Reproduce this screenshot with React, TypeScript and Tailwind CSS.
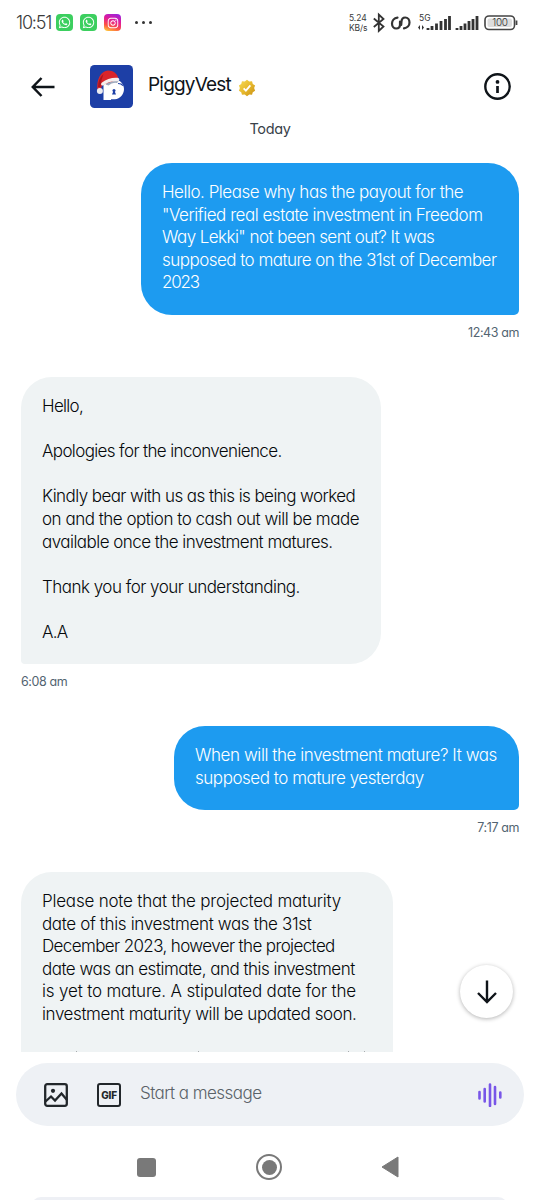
import type { ReactNode } from "react";
import { FaInstagram, FaWhatsapp } from "react-icons/fa";

type Line = { text: string; tracking?: string };

const payoutQuestion: Line[] = [
  { text: "Hello. Please why has the payout for the", tracking: "tracking-[-0.48px]" },
  { text: "\"Verified real estate investment in Freedom", tracking: "tracking-[-0.47px]" },
  { text: "Way Lekki\" not been sent out? It was", tracking: "tracking-[-0.56px]" },
  { text: "supposed to mature on the 31st of December", tracking: "tracking-[-0.53px]" },
  { text: "2023", tracking: "tracking-[-1.2px]" },
];

const apology: Line[] = [
  { text: "Hello,", tracking: "tracking-[-0.7px]" },
  { text: "" },
  { text: "Apologies for the inconvenience.", tracking: "tracking-[-0.63px]" },
  { text: "" },
  { text: "Kindly bear with us as this is being worked", tracking: "tracking-[-0.57px]" },
  { text: "on and the option to cash out will be made", tracking: "tracking-[-0.49px]" },
  { text: "available once the investment matures.", tracking: "tracking-[-0.54px]" },
  { text: "" },
  { text: "Thank you for your understanding.", tracking: "tracking-[-0.51px]" },
  { text: "" },
  { text: "A.A", tracking: "tracking-[-0.8px]" },
];

const followUp: Line[] = [
  { text: "When will the investment mature? It was", tracking: "tracking-[-0.43px]" },
  { text: "supposed to mature yesterday", tracking: "tracking-[-0.46px]" },
];

const estimate: Line[] = [
  { text: "Please note that the projected maturity", tracking: "tracking-[-0.21px]" },
  { text: "date of this investment was the 31st", tracking: "tracking-[-0.36px]" },
  { text: "December 2023, however the projected", tracking: "tracking-[-0.62px]" },
  { text: "date was an estimate, and this investment", tracking: "tracking-[-0.51px]" },
  { text: "is yet to mature. A stipulated date for the", tracking: "tracking-[-0.17px]" },
  { text: "investment maturity will be updated soon.", tracking: "tracking-[-0.4px]" },
  { text: "" },
];

function Lines({ lines }: { lines: Line[] }) {
  return (
    <>
      {lines.map((line, i) => (
        <p key={i} className={`h-[22.6px] whitespace-nowrap ${line.tracking ?? ""}`}>
          {line.text}
        </p>
      ))}
    </>
  );
}

function Sent({ className, children }: { className: string; children: ReactNode }) {
  return (
    <div
      className={`shrink-0 self-end rounded-[31px] rounded-br-[5px] bg-[#1d9bf0] pt-[18px] pl-[21px] text-[17px] leading-[22.6px] font-light text-white ${className}`}
    >
      {children}
    </div>
  );
}

function Received({ className, children }: { className: string; children: ReactNode }) {
  return (
    <div
      className={`shrink-0 rounded-[31px] rounded-bl-[4px] bg-[#eff3f4] pt-[18px] pl-[21px] text-[17px] leading-[22.6px] font-light text-[#05080b] ${className}`}
    >
      {children}
    </div>
  );
}

function Time({ className = "", children }: { className?: string; children: ReactNode }) {
  return (
    <p className={`mt-2 h-[54px] shrink-0 text-[12.5px] leading-[20px] tracking-[-0.4px] text-[#536471] ${className}`}>
      {children}
    </p>
  );
}

function StatusBar() {
  return (
    <div className="flex h-[46px] shrink-0 items-center pb-px pl-4 text-[#3a3a3a]">
      <span className="w-10 text-[18px] leading-none font-light tracking-[-1.2px] whitespace-nowrap">10:51</span>
      <div className="flex gap-[7px]">
        <span className="flex size-[17px] items-center justify-center rounded-[4px] bg-[#3ccf5f] text-white">
          <FaWhatsapp size={13} />
        </span>
        <span className="flex size-[17px] items-center justify-center rounded-[4px] bg-[#3ccf5f] text-white">
          <FaWhatsapp size={13} />
        </span>
        <span className="flex size-[17px] items-center justify-center rounded-[4px] bg-[linear-gradient(20deg,#ffc63a_5%,#fb5245_30%,#e01a9c_62%,#8b25e8_100%)] text-white">
          <FaInstagram size={12} />
        </span>
      </div>
      <div className="ml-[14px] flex gap-[4px]">
        <i className="size-[3px] rounded-full bg-[#333]" />
        <i className="size-[3px] rounded-full bg-[#333]" />
        <i className="size-[3px] rounded-full bg-[#333]" />
      </div>
      <div className="ml-auto flex items-center pr-[18px]">
        <div className="w-[23px] pt-[2px] text-[8.5px] leading-[9.5px] tracking-[-0.1px] whitespace-nowrap">
          <p>5.24</p>
          <p>KB/s</p>
        </div>
        <svg width="150" height="22" viewBox="0 0 150 22" fill="none">
          <path d="M1.800 6.500 11.500 14.500 6.800 19V2.500L11.500 7l-9.700 8" stroke="#333" strokeWidth="1.800" />
          <path
            d="M25.500 5.600c-3.500.4-5.500 3-5.500 5.900 0 2.800 1.700 5 4.300 5 2.500 0 3.700-1.700 3.700-4V9.500"
            stroke="#333"
            strokeWidth="2.200"
            strokeLinecap="round"
          />
          <path
            d="M32 16.400c3.500-.4 5.500-3 5.500-5.900 0-2.800-1.700-5-4.300-5-2.500 0-3.500 1.700-3.700 4l-.3 3.500"
            stroke="#333"
            strokeWidth="2.200"
            strokeLinecap="round"
          />
          <path d="m46 15.500 2-2.500v5zM52 15.500 50 18v-5z" fill="#333" />
          <path
            d="M56 18v-2M60 18v-4M64.500 18v-6.500M69 18V9M73.500 18V7M77.500 18V4M85 18v-2M89 18v-4M93 18v-6.500M97 18V9M101 18V7M105 18V4"
            stroke="#333"
            strokeWidth="2.800"
          />
          <text x="47" y="9" fontSize="8.500" fill="#333">5G</text>
          <rect x="113" y="4" width="29.500" height="13.500" rx="4" stroke="#444" strokeWidth="1.600" />
          <rect x="115.500" y="6.500" width="24.500" height="8.500" rx="2" fill="#ddd" />
          <path d="M144.500 8.500v4.500" stroke="#444" strokeWidth="1.800" />
          <text x="128" y="14.300" textAnchor="middle" fontSize="10" fontWeight="300" letterSpacing="-0.300" fill="#333">100</text>
        </svg>
      </div>
    </div>
  );
}

function Avatar() {
  return (
    <svg className="size-[43px]" viewBox="0 0 43 43">
      <rect width="43" height="43" rx="4.500" fill="#1d3fa6" />
      <path d="M13.500 18H17q3-3.800 8-3.500c5 .3 9 4.500 9 9.500 0 5.500-4 9.800-9 10.300h-4v.7h-7.500z" fill="#fff" />
      <path d="M15.500 19.500q5-5 13.500-4l-2 2.500q-5-.8-8.500 2.500z" fill="#9fa9bd" />
      <path d="M28 18.500q3.500 0 5 2.200" stroke="#1d3fa6" strokeWidth="1.200" fill="none" />
      <path d="M7.500 25C6 15 11 5.500 18 5.500c5.500 0 9.500 3 10.500 8.500L12.500 20q-1.500 2-2 5z" fill="#d9252b" />
      <path d="M8 22q0-8 5.500-13-2.500 6-3 13z" fill="#a91420" />
      <path d="M12 17.500q6.500-5.300 15.500-4.800c2.500.2 2.300 3.500 0 3.500-6-.4-10 .8-14 4-2.300 1-3.400-1.200-1.500-2.700z" fill="#f5efee" />
      <circle cx="9.900" cy="26" r="3" fill="#ececf0" />
      <circle cx="24" cy="25.500" r="1.500" fill="#1d3fa6" />
      <path d="m23.500 26-1.500 3.500h4L24.500 26z" fill="#1d3fa6" />
    </svg>
  );
}

function VerifiedBadge() {
  return (
    <svg className="mt-[3px] ml-[6px] size-[18px]" viewBox="0 0 24 24">
      <defs>
        <linearGradient id="gold" x1="0" y1="0" x2="1" y2="1">
          <stop offset="0" stopColor="#f6dc55" />
          <stop offset=".5" stopColor="#e7b92d" />
          <stop offset="1" stopColor="#c99014" />
        </linearGradient>
      </defs>
      <path
        fill="url(#gold)"
        d="m12 1 3 2.300 3.700-.3 1 3.600 3.100 2L21.500 12l1.300 3.500-3.100 2-1 3.600-3.700-.3L12 23l-3-2.200-3.700.3-1-3.600-3.100-2L2.500 12 1.200 8.600l3.100-2 1-3.600 3.700.3z"
      />
      <path d="m7.500 12.500 3 3 6-7" fill="none" stroke="#fff" strokeWidth="2.300" />
    </svg>
  );
}

function Header() {
  return (
    <header className="flex h-[81px] shrink-0 items-center pl-[31px]">
      <svg className="h-[20px] w-[24px]" viewBox="0 0 24 20" fill="none" stroke="#0f1419" strokeWidth="2.500">
        <path d="M23.500 10H2M10.500 1 1.800 10l8.700 9" />
      </svg>
      <div className="ml-[35px]">
        <Avatar />
      </div>
      <h1 className="mb-[3px] ml-[15px] w-[84px] text-[19px] leading-6 font-normal tracking-[-0.8px] whitespace-nowrap text-[#0f1419]">
        PiggyVest
      </h1>
      <VerifiedBadge />
      <svg className="mr-[29px] ml-auto size-[27px]" viewBox="0 0 27 27" fill="none">
        <circle cx="13.500" cy="13.500" r="12.200" stroke="#0f1419" strokeWidth="2.400" />
        <circle cx="13.500" cy="8.900" r="1.900" fill="#0f1419" />
        <path d="M13.500 13v7" stroke="#0f1419" strokeWidth="2.700" />
      </svg>
    </header>
  );
}

function Composer() {
  return (
    <div className="mx-4 mt-[11px] flex h-[63px] shrink-0 items-center rounded-full bg-[#eef1f5] pl-7">
      <svg className="size-6" viewBox="0 0 24 24" fill="none" stroke="#22272b" strokeWidth="2.300">
        <rect x="1.200" y="1.200" width="21.600" height="21.600" rx="2" />
        <path d="m1.500 18.500 5.500-5 4 4 6.500-7 5.500 6.500" />
        <circle cx="9" cy="7.800" r="2.100" fill="#22272b" stroke="none" />
      </svg>
      <div className="ml-[29px] flex size-6 items-center justify-center rounded-[3px] border-[2.5px] border-[#22272b] text-[10px] leading-none font-extrabold tracking-[-0.2px] text-[#22272b]">
        GIF
      </div>
      <span className="mb-[2px] ml-[19px] text-[17px] font-light tracking-[-0.55px] text-[#5a6268]">Start a message</span>
      <svg className="mr-[22px] ml-auto size-6" viewBox="0 0 24 24" stroke="#7856e8" strokeWidth="2.600" strokeLinecap="round">
        <path d="M1.500 9v6.500M6.700 6v12.500M12 1.500v21.500M17 4v17M22.300 9.500v5" />
      </svg>
    </div>
  );
}

function NavBar() {
  return (
    <div className="flex h-[71px] shrink-0 items-center pt-[11px] pl-[137px]">
      <span className="size-[19px] rounded-[3px] bg-[#797979]" />
      <span className="ml-[100px] flex size-[26px] items-center justify-center rounded-full border-2 border-[#797979]">
        <i className="size-[15px] rounded-full bg-[#797979]" />
      </span>
      <svg className="ml-[99px] h-[22px] w-[18px]" viewBox="0 0 18 22" fill="#797979" stroke="#797979" strokeLinejoin="round">
        <path d="M17 1v20L1 11z" />
      </svg>
    </div>
  );
}

export default function App() {
  return (
    <div className="relative flex h-[1200px] w-[540px] flex-col overflow-hidden bg-white font-[Inter,Roboto,sans-serif] [font-feature-settings:'cv11'_1]">
      <StatusBar />
      <Header />
      <main className="-mt-[9px] flex h-[934px] shrink-0 flex-col overflow-hidden px-[21px]">
        <p className="h-[45px] shrink-0 text-center text-[14.5px] leading-[21px] tracking-[-0.35px] text-[#39424a]">
          Today
        </p>
        <Sent className="h-[152px] w-[378px]">
          <Lines lines={payoutQuestion} />
        </Sent>
        <Time className="text-right">12:43 am</Time>
        <Received className="h-[287px] w-[360px]">
          <Lines lines={apology} />
        </Received>
        <Time>6:08 am</Time>
        <Sent className="h-[84px] w-[345px]">
          <Lines lines={followUp} />
        </Sent>
        <Time className="text-right">7:17 am</Time>
        <Received className="h-[240px] w-[372px]">
          <Lines lines={estimate} />
          {/* ascender tips of the next line, cut off by the composer */}
          <div className="mt-[3px] flex h-px pl-[34px]">
            <i className="w-px bg-[#a9adaf]" />
            <i className="ml-[121px] w-px bg-[#a9adaf]" />
            <i className="ml-[149px] w-px bg-[#a9adaf]" />
            <i className="ml-[15px] w-px bg-[#a9adaf]" />
          </div>
        </Received>
      </main>
      <Composer />
      <NavBar />
      <div className="mr-[32px] ml-[31px] h-8 shrink-0 rounded-t-[10px] bg-[#eef0f5]" />
      <button
        className="absolute top-[965px] right-[27px] flex size-[53px] items-center justify-center rounded-full bg-white shadow-[0_1px_4px_rgba(0,0,0,0.3)]"
        aria-label="Scroll to latest"
      >
        <svg className="h-6 w-5" viewBox="0 0 20 24" fill="none" stroke="#0f1419" strokeWidth="2.400">
          <path d="M10 .5v21.500M1 13l9 9 9-9" />
        </svg>
      </button>
    </div>
  );
}
